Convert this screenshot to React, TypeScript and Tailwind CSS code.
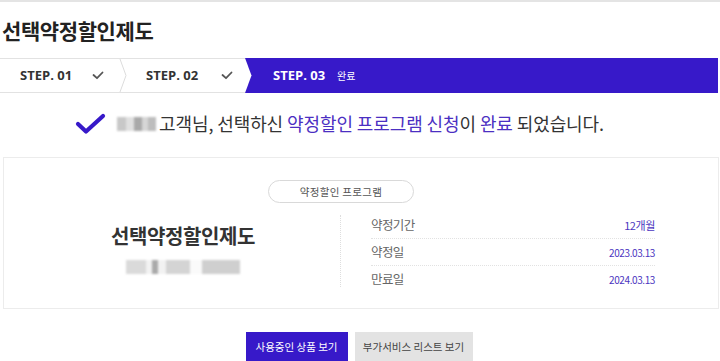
const KR = { fontFamily: '"Noto Sans CJK KR", "Noto Sans", sans-serif' };
const EN = { fontFamily: '"Open Sans", "Noto Sans CJK KR", sans-serif' };

const SmallCheck = ({ color = '#555' }: { color?: string }) => (
    <svg width="12" height="9" viewBox="0 0 12 9" fill="none">
        <polyline points="1.5,4 5,7.2 10.5,1.5" stroke={color} strokeWidth="1.8" strokeLinecap="round" strokeLinejoin="round" />
    </svg>
);

const Blur = ({ blocks }: { blocks: { w: number; c: string }[] }) => (
    <span className="inline-flex h-[14px] items-stretch blur-[1px]">
        {blocks.map((b, i) => (
            <span key={i} style={{ width: b.w, background: b.c }} />
        ))}
    </span>
);

const rows = [
    { label: '약정기간', value: '12개월', size: 'text-[11px]' },
    { label: '약정일', value: '2023.03.13', size: 'text-[10px]' },
    { label: '만료일', value: '2024.03.13', size: 'text-[10px]' },
];

export default function App() {
    return (
        <div className="w-[720px] h-[361px] overflow-hidden bg-white border-t-2 border-[#e4e4e4]" style={KR}>
            {/* title */}
            <h1 className="h-[56px] flex items-center pl-[2px] pt-[2px] text-[21px] font-bold text-[#222] tracking-[-0.4px]">
                선택약정할인제도
            </h1>

            {/* steps */}
            <div className="flex h-[35px] w-[718px] border-y border-[#e2e2e2]">
                <div className="w-[119px] flex items-center justify-between pl-[20px] pr-[15px] text-[13px] font-bold text-[#333]" style={EN}>
                    <span>STEP. 01</span>
                    <SmallCheck />
                </div>
                <svg width="8" height="33" viewBox="0 0 8 33" className="shrink-0">
                    <polyline points="1,0 7,16.5 1,33" fill="none" stroke="#dcdcdc" strokeWidth="1" />
                </svg>
                <div className="w-[118px] flex items-center justify-between pl-[19px] pr-[12px] text-[13px] font-bold text-[#333]" style={EN}>
                    <span>STEP. 02</span>
                    <SmallCheck />
                </div>
                <svg width="8" height="33" viewBox="0 0 8 33" className="shrink-0 -my-px h-[35px]" preserveAspectRatio="none">
                    <rect x="0" y="0" width="8" height="33" fill="#3719c9" />
                    <polygon points="0,0 6.5,16.5 0,33" fill="#fff" />
                </svg>
                <div className="flex-1 -my-px flex items-center gap-[12px] pl-[20px] bg-[#3719c9] text-white">
                    <span className="text-[13px] font-bold" style={EN}>STEP. 03</span>
                    <span className="text-[10px]">완료</span>
                </div>
            </div>

            {/* complete message */}
            <div className="h-[64px] flex items-center pl-[75px] pb-[3px]">
                <svg width="31" height="22" viewBox="0 0 31 22" fill="none" className="mr-[11px]">
                    <polyline points="3,11 11,18.5 28,3" stroke="#3719c9" strokeWidth="4.2" strokeLinecap="round" strokeLinejoin="round" />
                </svg>
                <Blur blocks={[{ w: 9, c: '#c8c8c8' }, { w: 8, c: '#e0e0e0' }, { w: 8, c: '#a9a9a9' }, { w: 6, c: '#d6d6d6' }, { w: 8, c: '#bdbdbd' }]} />
                <p className="ml-[3px] text-[18px] text-[#333] tracking-[-0.1px]">
                    고객님, 선택하신 <span className="text-[#4b2fc2]">약정할인 프로그램 신청</span>이{' '}
                    <span className="text-[#4b2fc2]">완료</span> 되었습니다.
                </p>
            </div>

            {/* card */}
            <div className="ml-[3px] w-[716px] h-[152px] border border-[#ececec] pt-[22px]">
                <div className="ml-[264px] w-[146px] h-[23px] rounded-full border border-[#d9d9d9] flex items-center justify-center text-[10.5px] text-[#555] tracking-[0.3px]">
                    약정할인 프로그램
                </div>
                <div className="w-full flex mt-[12px]">
                    <div className="w-[337px] h-[72px] pl-[22px] flex flex-col items-center justify-center border-r border-dotted border-[#dedede]">
                        <div className="text-[20px] font-bold text-[#333] leading-[26px] tracking-[-0.4px]">선택약정할인제도</div>
                        <div className="mt-[6px]">
                            <Blur blocks={[{ w: 20, c: '#dadada' }, { w: 6, c: '#f2f2f2' }, { w: 6, c: '#aaa' }, { w: 8, c: '#f2f2f2' }, { w: 24, c: '#d4d4d4' }, { w: 12, c: '#fafafa' }, { w: 38, c: '#cfcfcf' }]} />
                        </div>
                    </div>
                    <div className="pl-[30px] w-[314px] -mt-[3px]">
                        {rows.map((r, i) => (
                            <div
                                key={r.label}
                                className={`h-[27px] flex items-center justify-between ${i < rows.length - 1 ? 'border-b border-dotted border-[#e2e2e2]' : ''}`}
                            >
                                <span className="text-[12.5px] text-[#666] tracking-[-0.6px]">{r.label}</span>
                                <span className={`${r.size} text-[#4b35c0] tracking-[-0.4px]`}>{r.value}</span>
                            </div>
                        ))}
                    </div>
                </div>
            </div>

            {/* buttons */}
            <div className="flex justify-center gap-[7px] mt-[23px] pr-[2px]">
                <button className="w-[102px] h-[30px] bg-[#3719c9] text-white text-[10.5px]">사용중인 상품 보기</button>
                <button className="w-[118px] h-[30px] bg-[#e3e3e3] text-[#444] text-[10.5px]">부가서비스 리스트 보기</button>
            </div>
        </div>
    );
}
